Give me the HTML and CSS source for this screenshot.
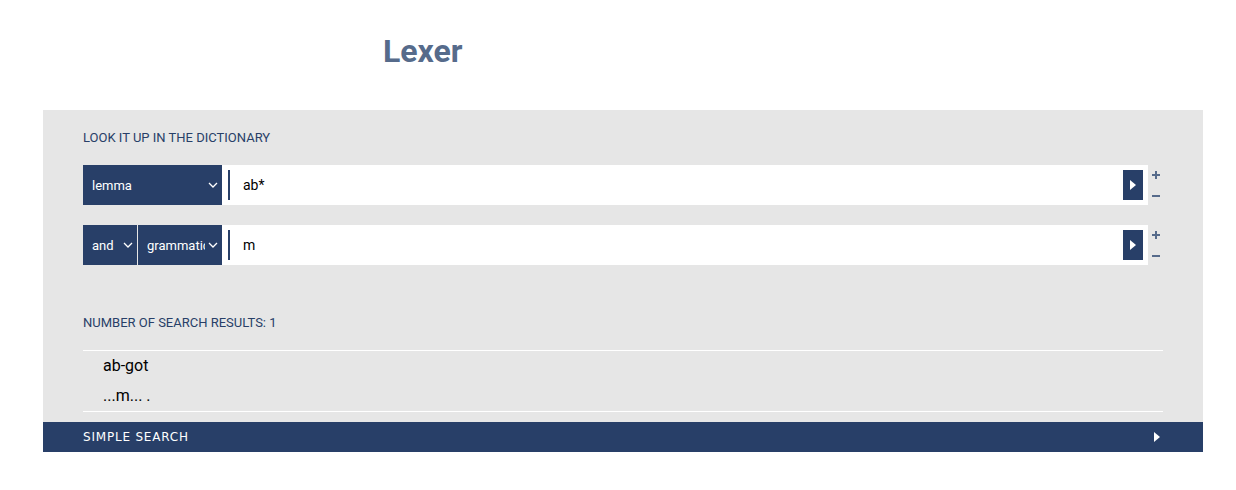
FILE: index.html
```html
<!DOCTYPE html>
<html>
<head>
<meta charset="utf-8">
<link rel="stylesheet" href="styles.css">
</head>
<body>
<header class="header">
  <h1 class="title">Lexer</h1>
</header>
<main class="panel">
  <section class="search">
    <div class="label">LOOK IT UP IN THE DICTIONARY</div>
    <div class="row">
      <div class="sel sel-lemma">lemma<span class="chev"><svg width="10" height="6" viewBox="0 0 10 6"><path d="M1 1l4 4 4-4" fill="none" stroke="#fff" stroke-width="1.3"/></svg></span></div>
      <div class="input">
        <span class="caret"></span>
        <span class="value">ab*</span>
        <span class="go"><svg width="6" height="10" viewBox="0 0 6 10"><path d="M0 0l6 5-6 5z" fill="#fff"/></svg></span>
      </div>
      <div class="pm">
        <svg width="8" height="8" viewBox="0 0 8 8"><path d="M0 4h8M4 0v8" stroke="#566b8b" stroke-width="2"/></svg>
        <svg width="8" height="2" viewBox="0 0 8 2"><path d="M0 1h8" stroke="#566b8b" stroke-width="2"/></svg>
      </div>
    </div>
    <div class="row">
      <div class="sel sel-and">and<span class="chev"><svg width="10" height="6" viewBox="0 0 10 6"><path d="M1 1l4 4 4-4" fill="none" stroke="#fff" stroke-width="1.3"/></svg></span></div>
      <div class="sel sel-gram"><span class="clip">grammatical</span><span class="chev"><svg width="10" height="6" viewBox="0 0 10 6"><path d="M1 1l4 4 4-4" fill="none" stroke="#fff" stroke-width="1.3"/></svg></span></div>
      <div class="input">
        <span class="caret"></span>
        <span class="value">m</span>
        <span class="go"><svg width="6" height="10" viewBox="0 0 6 10"><path d="M0 0l6 5-6 5z" fill="#fff"/></svg></span>
      </div>
      <div class="pm">
        <svg width="8" height="8" viewBox="0 0 8 8"><path d="M0 4h8M4 0v8" stroke="#566b8b" stroke-width="2"/></svg>
        <svg width="8" height="2" viewBox="0 0 8 2"><path d="M0 1h8" stroke="#566b8b" stroke-width="2"/></svg>
      </div>
    </div>
  </section>
  <section class="results">
    <div class="label">NUMBER OF SEARCH RESULTS: 1</div>
    <div class="list">
      <div class="item">ab-got</div>
      <div class="item">...m... .</div>
    </div>
  </section>
  <div class="bar">
    <span>SIMPLE SEARCH</span>
    <svg width="6" height="10" viewBox="0 0 6 10"><path d="M0 0l6 5-6 5z" fill="#fff"/></svg>
  </div>
</main>
</body>
</html>
```
FILE: styles.css
```css
html, body { margin: 0; padding: 0; background: #fff; }
body { font-family: Roboto, "Liberation Sans", sans-serif; color: #000; }
.header { height: 110px; display: flex; padding-left: 383px; box-sizing: border-box; }
.title { margin: 0; padding-top: 32px; font-size: 32px; font-weight: 700; color: #566b8b; line-height: 38px; }
.panel { margin: 0 33px 0 43px; background: #e6e6e6; }
.search { padding: 21px 40px 0 40px; }
.label { font-size: 13px; color: #283f68; line-height: 14px; }
.search .label { margin-bottom: 20px; }
.row { display: flex; height: 40px; margin-bottom: 20px; }
.sel { background: #283f68; color: #fff; font-size: 13px; display: flex; align-items: center; padding-left: 9px; box-sizing: border-box; position: relative; }
.sel-lemma { width: 139px; }
.sel-and { width: 54px; margin-right: 1px; }
.sel-gram { width: 84px; }
.clip { display: block; width: 58px; overflow: hidden; white-space: nowrap; }
.chev { position: absolute; right: 4px; top: 17px; display: flex; }
.input { flex: 1; background: #fff; display: flex; align-items: center; padding-left: 6px; padding-right: 5px; }
.caret { width: 2px; height: 30px; background: #283f68; }
.value { flex: 1; padding-left: 13px; font-size: 14px; }
.go { width: 20px; height: 30px; background: #283f68; display: flex; align-items: center; justify-content: center; }
.pm { width: 15px; display: flex; flex-direction: column; align-items: center; padding-top: 6px; gap: 16px; box-sizing: border-box; }
.pm svg { display: block; }
.results { padding: 31px 40px 10px 40px; }
.results .label { margin-bottom: 20px; }
.list { border-top: 1px solid #fff; border-bottom: 1px solid #fff; padding: 0 0 0 20px; }
.item { font-size: 16px; line-height: 30px; color: #000; }
.bar { background: #283f68; height: 30px; display: flex; align-items: center; justify-content: space-between; padding: 0 43px 0 40px; color: #fff; font-family: "DejaVu Sans", sans-serif; font-size: 12px; letter-spacing: 0.8px; }
```
